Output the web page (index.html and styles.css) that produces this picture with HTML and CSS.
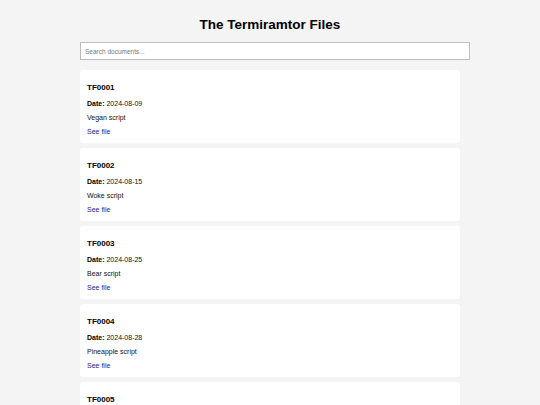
FILE: index.html
```html
<!DOCTYPE html>
<html lang="en">
<head>
    <meta charset="UTF-8">
    <meta name="viewport" content="width=device-width, initial-scale=1.0">
    <title>The Termiramtor Files</title>
    <link rel="stylesheet" href="styles.css">
</head>
<body>
    <div class="container">
        <h1 class="title">The Termiramtor Files</h1>
        <input type="text" class="search" placeholder="Search documents...">

        <div class="doc-list">
            <div class="doc">
                <h3>TF0001</h3>
                <p><strong>Date:</strong> 2024-08-09</p>
                <p>Vegan script</p>
                <a href="#">See file</a>
            </div>
            <div class="doc">
                <h3>TF0002</h3>
                <p><strong>Date:</strong> 2024-08-15</p>
                <p>Woke script</p>
                <a href="#">See file</a>
            </div>
            <div class="doc">
                <h3>TF0003</h3>
                <p><strong>Date:</strong> 2024-08-25</p>
                <p>Bear script</p>
                <a href="#">See file</a>
            </div>
            <div class="doc">
                <h3>TF0004</h3>
                <p><strong>Date:</strong> 2024-08-28</p>
                <p>Pineapple script</p>
                <a href="#">See file</a>
            </div>
            <div class="doc">
                <h3>TF0005</h3>
                <p><strong>Date:</strong> 2024-09-02</p>
                <p>Cat script</p>
                <a href="#">See file</a>
            </div>
        </div>
    </div>
</body>
</html>
```

FILE: styles.css
```css
body {
    margin: 0;
    background-color: #f4f4f4;
    font-family: "Liberation Sans", Arial, sans-serif;
    font-size: 7px;
    color: #111;
}
.container {
    width: 380px;
    margin: 0 auto;
}
.title {
    font-size: 13.5px;
    line-height: 16px;
    text-align: center;
    margin: 17px 0 9px;
    color: #000;
}
.search {
    display: block;
    width: 100%;
    height: 16px;
    padding: 0 4px;
    margin: 0 0 10px;
    border: 1px solid #bdbdbd;
    border-radius: 0;
    font-family: inherit;
    font-size: 6.5px;
    background: white;
    outline: none;
}
.search::placeholder {
    color: #777;
}
.doc-list {
    display: flex;
    flex-direction: column;
    gap: 5px;
}
.doc {
    background: white;
    border-radius: 3px;
    padding: 12px 7px 4px;
}
.doc h3 {
    font-size: 8px;
    line-height: 12px;
    margin: 0 0 3px;
    color: #000;
}
.doc p {
    margin: 0;
    line-height: 14px;
}
.doc strong {
    color: #000;
}
.doc a {
    display: block;
    line-height: 14px;
    color: #22229a;
    text-decoration: none;
}
```
